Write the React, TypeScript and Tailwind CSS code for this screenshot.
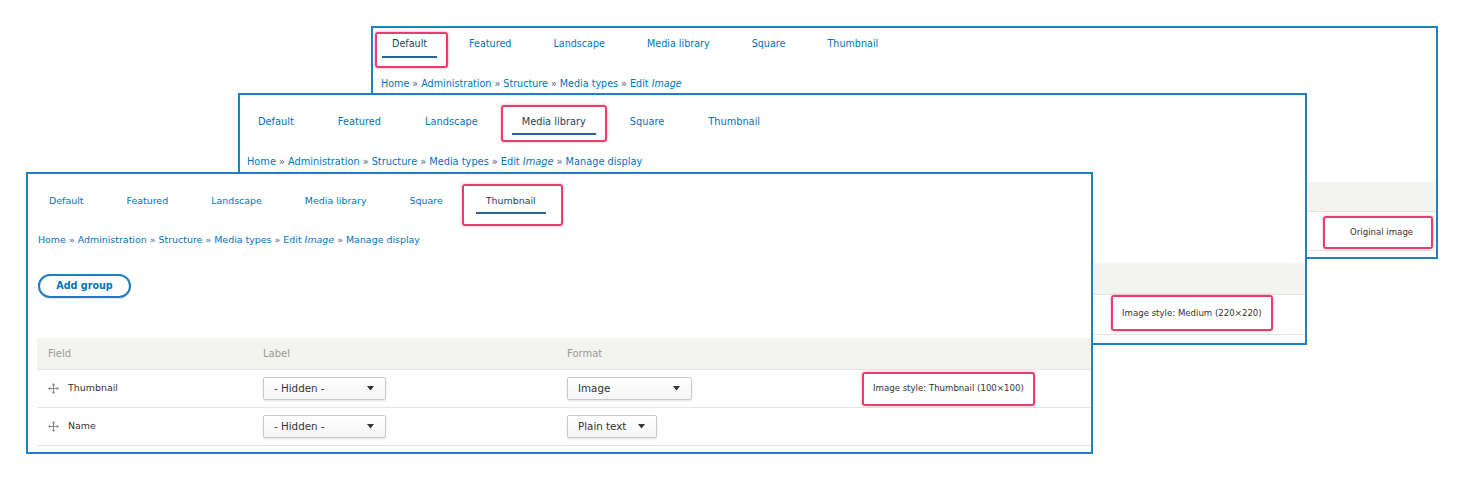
import type { ReactNode } from "react";

const TABS = ["Default", "Featured", "Landscape", "Media library", "Square", "Thumbnail"];

type PanelCfg = {
  pos: string;
  active: string;
  tabRow: string;
  size: string;
  hl: string;
  ul: string;
  crumbRow: string;
  manage: boolean;
  btnMt: string;
  headMt: string;
  headH: string;
  rowH: string;
  cols: string;
  summary: ReactNode;
  summaryBox: string;
  rows: number;
  // the lower panels are covered here, so only the top one draws the button
  button: boolean;
};

function DragIcon() {
  return (
    <svg width="11" height="11" viewBox="0 0 11 11" className="shrink-0">
      <path d="M5.5 2v7M2 5.5h7" stroke="#8a8a8a" strokeWidth="1" />
      <path d="M5.5 0L3.8 2.2h3.4zM5.5 11L3.8 8.8h3.4zM0 5.5L2.2 3.8v3.4zM11 5.5L8.8 3.8v3.4z" fill="#8a8a8a" />
    </svg>
  );
}

function Select({ label, w }: { label: string; w: string }) {
  return (
    <div
      className={`${w} h-[23px] flex items-center justify-between pl-[10px] pr-[11px] border border-[#c9c9c9] rounded-[2px] bg-gradient-to-b from-white to-[#f5f5f5] shadow-[0_1px_2px_rgba(0,0,0,0.12)] text-[10.3px] text-[#333]`}
    >
      <span>{label}</span>
      <svg width="7" height="5" viewBox="0 0 7 5">
        <path d="M0 0h7L3.5 4.6z" fill="#333" />
      </svg>
    </div>
  );
}

function Tab({ label, cfg }: { label: string; cfg: PanelCfg }) {
  const active = label === cfg.active;
  return (
    <div className="relative flex flex-col">
      <span className={`leading-4 whitespace-nowrap ${active ? "text-[#1c3f5f]" : "text-[#0074bd]"}`}>{label}</span>
      {active && <span className={`${cfg.ul} h-[2px] mx-[-10px] bg-[#2a649a]`} />}
      {active && (
        <span
          className={`absolute ${cfg.hl} border-2 border-[#ec3b6e] rounded-[3px] shadow-[0_0_3px_rgba(236,59,110,0.45)]`}
        />
      )}
    </div>
  );
}

function Crumbs({ manage }: { manage: boolean }) {
  const sep = <span className="text-[#4d6275] mx-[3px]">»</span>;
  return (
    <div className="leading-4 whitespace-nowrap text-[#0074bd]">
      Home{sep}Administration{sep}Structure{sep}Media types{sep}Edit <i>Image</i>
      {manage && (
        <>
          {sep}Manage display
        </>
      )}
    </div>
  );
}

function Row({ name, format, fw, cfg, summary }: { name: string; format: string; fw: string; cfg: PanelCfg; summary?: ReactNode }) {
  return (
    <div className={`grid ${cfg.cols} ${cfg.rowH} items-center border-b border-[#e6e4de]`}>
      <div className="flex items-center gap-[9px] pl-[11px] text-[#333]">
        <DragIcon />
        <span>{name}</span>
      </div>
      <div>
        <Select label="- Hidden -" w="w-[123px]" />
      </div>
      <div>
        <Select label={format} w={fw} />
      </div>
      <div>
        {summary && (
          <div
            className={`inline-flex items-center ${cfg.summaryBox} border-2 border-[#ec3b6e] rounded-[3px] shadow-[0_0_3px_rgba(236,59,110,0.45)] text-[8.6px] text-[#333] whitespace-nowrap`}
          >
            {summary}
          </div>
        )}
      </div>
    </div>
  );
}

function Panel({ cfg }: { cfg: PanelCfg }) {
  return (
    <div className={`absolute ${cfg.pos} border-2 border-[#1f80c4] bg-white overflow-hidden ${cfg.size}`}>
      <div className={`flex items-start ${cfg.tabRow}`}>
        {TABS.map((t) => (
          <Tab key={t} label={t} cfg={cfg} />
        ))}
      </div>
      <div className={cfg.crumbRow}>
        <Crumbs manage={cfg.manage} />
      </div>
      <div className={`${cfg.btnMt} pl-[10px] h-[24px]`}>
        {cfg.button && (
          <div className="w-[93px] h-[24px] flex items-center justify-center rounded-full border-2 border-[#1f7cc0] bg-white font-bold text-[9.6px] text-[#0074bd] shadow-[0_1px_2px_rgba(0,0,0,0.1)]">
            Add group
          </div>
        )}
      </div>
      <div className={`${cfg.headMt} ml-[9px]`}>
        <div className={`grid ${cfg.cols} ${cfg.headH} items-center bg-[#f3f3ef] border-b border-[#e6e4de] text-[10px] text-[#9a9a9a]`}>
          <div className="pl-[11px]">Field</div>
          <div>Label</div>
          <div>Format</div>
          <div />
        </div>
        <Row name="Thumbnail" format="Image" fw="w-[125px]" cfg={cfg} summary={cfg.summary} />
        {cfg.rows > 1 && <Row name="Name" format="Plain text" fw="w-[90px]" cfg={cfg} />}
      </div>
    </div>
  );
}

const P1: PanelCfg = {
  pos: "left-[371px] top-[26px] w-[1067px] h-[233px]",
  active: "Default",
  tabRow: "h-[40px] pt-[8px] pl-[19px] gap-[42px]",
  size: "text-[9.6px]",
  hl: "top-[-4px] left-[-17px] right-[-21px] bottom-[-10px]",
  ul: "mt-[4px]",
  crumbRow: "mt-[8px] pl-[8px]",
  manage: false,
  btnMt: "mt-[26px]",
  headMt: "mt-[40px]",
  headH: "h-[30px]",
  rowH: "h-[39px]",
  cols: "grid-cols-[226px_304px_411px_1fr]",
  summary: "Original image",
  summaryBox: "pl-[25px] pr-[18px] h-[33px] mt-[2px]",
  rows: 1,
  button: false,
};

const P2: PanelCfg = {
  pos: "left-[238px] top-[93px] w-[1069px] h-[252px]",
  active: "Media library",
  tabRow: "h-[50px] pt-[19px] pl-[18px] gap-[44px]",
  size: "text-[9.8px]",
  hl: "top-[-9px] left-[-21px] right-[-21px] bottom-[-7px]",
  ul: "mt-[3px]",
  crumbRow: "mt-[9px] pl-[7px]",
  manage: true,
  btnMt: "mt-[26px]",
  headMt: "mt-[43px]",
  headH: "h-[32px]",
  rowH: "h-[40px]",
  cols: "grid-cols-[226px_304px_332px_1fr]",
  summary: "Image style: Medium (220×220)",
  summaryBox: "px-[9px] h-[36px] mb-[3px]",
  rows: 1,
  button: false,
};

const P3: PanelCfg = {
  pos: "left-[26px] top-[172px] w-[1067px] h-[282px]",
  active: "Thumbnail",
  tabRow: "h-[50px] pt-[19px] pl-[21px] gap-[43px]",
  size: "text-[9.45px]",
  hl: "top-[-9px] left-[-24px] right-[-27px] bottom-[-12px]",
  ul: "mt-[3px]",
  crumbRow: "mt-[8px] pl-[10px]",
  manage: true,
  btnMt: "mt-[26px]",
  headMt: "mt-[40px]",
  headH: "h-[32px]",
  rowH: "h-[38px]",
  cols: "grid-cols-[226px_304px_295px_1fr]",
  summary: "Image style: Thumbnail (100×100)",
  summaryBox: "px-[9px] h-[34px]",
  rows: 2,
  button: true,
};

export default function App() {
  return (
    <div className="relative w-[1465px] h-[479px] bg-white overflow-hidden font-['DejaVu_Sans',sans-serif]">
      <Panel cfg={P1} />
      <Panel cfg={P2} />
      <Panel cfg={P3} />
    </div>
  );
}
